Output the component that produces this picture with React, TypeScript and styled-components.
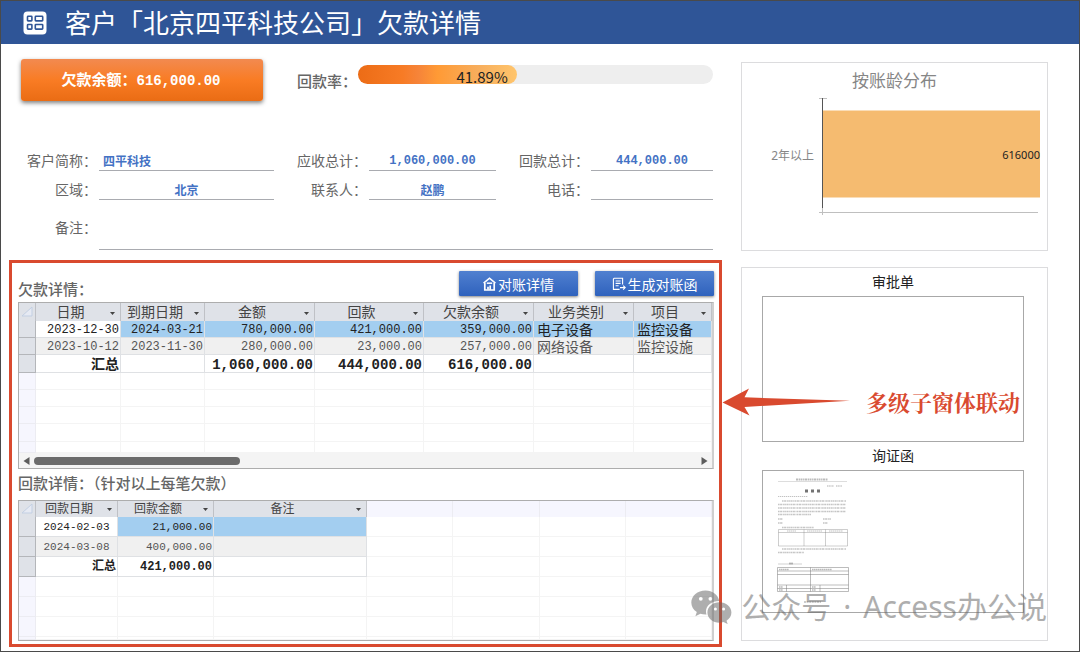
import React from "react";
import styled, { createGlobalStyle, css } from "styled-components";

const SANS = '"Noto Sans CJK SC", "Noto Sans", sans-serif';
const MONO = '"Liberation Mono", "Noto Sans CJK SC", monospace';

const GlobalStyle = createGlobalStyle`
  *, *::before, *::after { box-sizing: border-box; }
  body { margin: 0; background: #fff; font-family: ${SANS}; }
  h1, h2, h3, p { margin: 0; font-weight: 400; }
  button, input, textarea { font: inherit; margin: 0; padding: 0; border: 0; }
`;

const Page = styled.div`
  display: flex;
  flex-direction: column;
  min-height: 100vh;
  border: 1px solid #4a4a4a;
  overflow: hidden;
`;

const TitleBar = styled.header`
  display: flex;
  align-items: center;
  gap: 18px;
  height: 43px;
  padding: 0 22px;
  background: #2f5597;
`;

const Title = styled.h1`
  padding-bottom: 2px;
  font-size: 26px;
  line-height: 38px;
  color: #fff;
  white-space: nowrap;
`;

const Main = styled.main`
  display: flex;
  gap: 19px;
  padding: 0 31px 0 8px;
`;

const LeftColumn = styled.div`
  flex: 1;
  min-width: 0;
`;

const RightColumn = styled.aside`
  position: relative;
  flex: none;
  display: flex;
  flex-direction: column;
  gap: 16px;
  width: 307px;
  padding-top: 18px;
`;

const Summary = styled.section`
  padding: 15px 9px 0 12px;
`;

const BalanceRow = styled.div`
  display: flex;
  align-items: flex-start;
  height: 83px;
`;

const BalanceButton = styled.button`
  width: 242px;
  height: 42px;
  margin-right: 34px;
  padding: 0 2px 4px 0;
  border-radius: 3px;
  background: linear-gradient(#f28a50, #f97c24 50%, #ea6c14);
  box-shadow: 0 2px 4px rgba(0, 0, 0, 0.5);
  color: #fff;
  font-size: 15px;
  font-weight: 700;
  white-space: nowrap;
`;

const BalanceAmount = styled.span`
  font-family: ${MONO};
  font-size: 14px;
`;

const RateLabel = styled.span`
  flex: none;
  width: 61px;
  font-size: 15px;
  font-weight: 500;
  line-height: 44px;
  color: #666;
`;

const RateTrack = styled.div`
  flex: 1;
  height: 19px;
  margin-top: 6px;
  border-radius: 10px;
  background: #eee;
`;

const RateFill = styled.div`
  height: 19px;
  padding-right: 9px;
  border-radius: 10px;
  background: linear-gradient(90deg, #ec6c16, #f77b25 28%, #f68439 38%, #ff9a35 50%, #f7ad5c 75%, #ffc56c);
  color: #222;
  font-size: 15px;
  line-height: 24px;
  text-align: right;
`;

const Form = styled.form`
  display: grid;
  grid-template-columns: 78px 175fr 95px 127fr 95px 122fr;
  grid-template-rows: 29px 29px 50px;
  height: 118px;
`;

const FieldLabel = styled.label<{ $raised?: boolean }>`
  align-self: end;
  padding: 0 2px ${(p) => (p.$raised ? 13 : 1)}px 0;
  font-size: 14px;
  line-height: 20px;
  text-align: right;
  color: #666;
  white-space: nowrap;
`;

const underlined = css`
  min-width: 0;
  width: 100%;
  border-bottom: 1px solid #a9abb0;
  background: transparent;
  color: #4472c4;
  font-family: ${MONO};
  font-size: 12px;
  font-weight: 700;
  outline: none;
`;

const Field = styled.input<{ $align?: string }>`
  ${underlined}
  align-self: end;
  height: 20px;
  padding: 0 4px;
  line-height: 18px;
  text-align: ${(p) => p.$align || "center"};
`;

const NoteField = styled.textarea`
  ${underlined}
  grid-column: 2 / -1;
  align-self: end;
  height: 40px;
  resize: none;
`;

const Frame = styled.section`
  padding: 0 5px 3px 6px;
  border: 3px solid #d94a2f;
`;

const Toolbar = styled.div`
  display: flex;
  align-items: flex-start;
  gap: 17px;
  height: 39px;
  padding-top: 8px;
`;

const SectionTitle = styled.h2<{ $grow?: boolean }>`
  flex: ${(p) => (p.$grow ? 1 : "none")};
  padding-bottom: ${(p) => (p.$grow ? 0 : 3)}px;
  font-size: 15px;
  font-weight: 500;
  line-height: ${(p) => (p.$grow ? 36 : 28)}px;
  color: #666;
`;

const ActionButton = styled.button`
  display: flex;
  align-items: center;
  justify-content: center;
  gap: 2px;
  width: 119px;
  height: 25px;
  border-radius: 1px;
  background: linear-gradient(#5080d0, #2f62bd);
  box-shadow: 0 1px 3px rgba(0, 0, 0, 0.5);
  color: #fff;
  font-size: 14px;
  line-height: 20px;
  white-space: nowrap;
`;

const GridBox = styled.div`
  border: 1px solid #adadad;
  border-right: 2px solid #cfcfcf;
  overflow: hidden;
`;

const Sheet = styled.table<{ $small?: boolean }>`
  width: 100%;
  table-layout: fixed;
  border-collapse: separate;
  border-spacing: 0;
  font-family: ${MONO};
  font-size: ${(p) => (p.$small ? 11 : 12)}px;
  color: #333;

  th, td {
    padding: 0;
    white-space: nowrap;
  }
`;

const Row = styled.tr<{ $h: number }>`
  height: ${(p) => p.$h}px;
  line-height: ${(p) => Math.max(p.$h - 4, 1)}px;
`;

const HeadCell = styled.th<{ $blank?: boolean; $small?: boolean }>`
  border-right: 1px solid ${(p) => (p.$blank ? "#ececf2" : "#bfc1c6")};
  background: ${(p) => (p.$blank ? "#f6f6fe" : "#dfe2e8")};
  color: #444;
  font-family: ${SANS};
  font-size: ${(p) => (p.$small ? 12 : 14)}px;
  font-weight: 400;
`;

const HeadInner = styled.div`
  display: flex;
  align-items: flex-end;
  justify-content: center;
  padding-bottom: 2px;
`;

const HeadText = styled.span`
  flex: 1;
  text-align: center;
`;

const SortButton = styled.button`
  display: flex;
  align-items: center;
  justify-content: center;
  width: 15px;
  height: 9px;
  background: transparent;
`;

const Selector = styled.th<{ $blank?: boolean }>`
  border-right: 1px solid ${(p) => (p.$blank ? "#ececf2" : "#b4b6ba")};
  border-bottom: 1px solid ${(p) => (p.$blank ? "#ececf2" : "#b4b6ba")};
  background: ${(p) => (p.$blank ? "#f6f6fe" : "#dfe2e8")};
`;

type Tone = "plain" | "active" | "stripe" | "total" | "empty";

const toneBackground: Record<Tone, string> = {
  plain: "#fff",
  active: "#a3cef0",
  stripe: "#f0f0f0",
  total: "#fff",
  empty: "#fff",
};

const Cell = styled.td<{ $tone: Tone; $text?: boolean; $small?: boolean; $center?: boolean }>`
  && {
    padding: ${(p) => (p.$text || p.$small || p.$tone === "empty" ? 0 : 3)}px ${(p) => (p.$text ? 3 : 1)}px 0;
  }
  border-right: 1px solid ${(p) => (p.$tone === "empty" ? "#f4f4f4" : "#dfe1e4")};
  border-bottom: 1px solid ${(p) => (p.$tone === "empty" ? "#f4f4f4" : "#dfe1e4")};
  background: ${(p) => toneBackground[p.$tone]};
  text-align: ${(p) => (p.$text ? "left" : p.$center ? "center" : "right")};
  color: ${(p) => (p.$tone === "stripe" ? "#555" : "#222")};
  ${(p) => p.$text && css`font-family: ${SANS}; font-size: 14px;`}
  ${(p) => p.$tone === "total" && css`font-weight: 700; font-size: ${p.$small ? 12 : 14}px;`}
`;

const ScrollBar = styled.div`
  display: flex;
  align-items: center;
  gap: 4px;
  height: 15px;
  padding: 0 4px;
  background: #f4f4f4;
`;

const ScrollTrack = styled.div`
  flex: 1;
`;

const ScrollThumb = styled.div`
  width: 31%;
  height: 8px;
  border-radius: 4px;
  background: #6b6b6b;
`;

const ChartCard = styled.section`
  height: 189px;
  border: 1px solid #dcdcde;
`;

const ChartTitle = styled.h2`
  height: 33px;
  font-size: 17px;
  line-height: 34px;
  text-align: center;
  color: #868686;
`;

const ChartSvg = styled.svg`
  display: block;
  width: 100%;
  font-family: "Noto Sans", "Noto Sans CJK SC", sans-serif;
`;

const DocsCard = styled.section`
  height: 374px;
  padding: 0 23px 0 20px;
  border: 1px solid #dcdcde;
`;

const DocTitle = styled.h3`
  padding-bottom: 2px;
  font-size: 14px;
  line-height: 26px;
  text-align: center;
  color: #222;
`;

const DocBox = styled.div<{ $h: number }>`
  height: ${(p) => p.$h}px;
  padding: 5px 13px;
  border: 1px solid #a8a8a8;
`;

const Callout = styled.div`
  position: absolute;
  top: 342px;
  left: -19px;
  display: flex;
  align-items: center;
  gap: 15px;
  color: #d94a2f;
  font-family: "Noto Serif CJK SC", "Noto Sans CJK SC", serif;
  font-size: 22px;
  font-weight: 700;
  line-height: 32px;
  white-space: nowrap;
  pointer-events: none;
`;

const Watermark = styled.div`
  position: absolute;
  top: 541px;
  right: 1px;
  display: flex;
  align-items: center;
  gap: 9px;
  color: #666;
  opacity: 0.52;
  font-family: "Noto Sans", "Noto Sans CJK SC", sans-serif;
  font-size: 30px;
  line-height: 44px;
  white-space: nowrap;
  pointer-events: none;
`;

const WatermarkDot = styled.span`
  padding: 0 3px;
`;

const FormIcon = () => (
  <svg width="24" height="24" viewBox="0 0 24 24" aria-hidden="true">
    <rect x="0.5" y="0.5" width="23" height="23" rx="4" fill="#fff" />
    <g fill="none" stroke="#2f5597" strokeWidth="1.6">
      <rect x="4.5" y="5.3" width="4.4" height="4.6" rx="0.6" />
      <rect x="12.3" y="5.3" width="7.4" height="4.6" rx="0.6" />
      <rect x="4.5" y="13.5" width="4.4" height="4.6" rx="0.6" />
      <rect x="12.3" y="13.5" width="7.4" height="4.6" rx="0.6" />
    </g>
  </svg>
);

const HouseIcon = () => (
  <svg width="13" height="14" viewBox="0 0 13 14" fill="none" stroke="#fff" aria-hidden="true">
    <path d="M0.6 6.2 6.5 1.2 12.4 6.2" strokeWidth="1.6" />
    <path d="M1.8 6v7h9.4V6" strokeWidth="1.7" />
    <path d="M3.8 6.2h5.4" strokeWidth="1.5" />
    <path d="M7.2 8.4v4.400M5 9.800v2.700" strokeWidth="1.7" />
  </svg>
);

const StatementIcon = () => (
  <svg width="14" height="14" viewBox="0 0 14 14" fill="none" stroke="#fff" strokeWidth="1.1" aria-hidden="true">
    <path d="M10.6 7.6V1.2H2.2L1.4 2v10.4h6.2M3.6 4h5M3.6 6.4h5M3.6 8.8h3" />
    <path d="M8 10.6h5M11.2 8.6l2 2-2 2" />
  </svg>
);

const SortArrow = () => (
  <svg width="7" height="5" viewBox="0 0 7 5" aria-hidden="true">
    <path d="M1 1h5L3.5 4z" fill="#444" />
  </svg>
);

const CornerIcon = () => (
  <svg width="12" height="11" viewBox="0 0 12 11" aria-hidden="true">
    <path d="M11 1v9H1z" fill="#e6eaf3" stroke="#c3cfe2" />
  </svg>
);

const ScrollArrow = ({ flip }: { flip?: boolean }) => (
  <svg width="7" height="8" viewBox="0 0 7 8" aria-hidden="true">
    <path d={flip ? "M0.5 0v8L6.5 4z" : "M6.5 0v8L0.5 4z"} fill="#5c5c5c" />
  </svg>
);

const WechatIcon = () => (
  <svg width="41" height="34" viewBox="0 0 41 34" aria-hidden="true">
    <path
      fill="currentColor"
      fillRule="evenodd"
      d="M14.5 0.5C6.6 0.5 0.3 5.9 0.3 12.6c0 3.9 2.1 7.3 5.5 9.5l-1.4 4.1 5-2.5c1.6.5 3.3.8 5.1.8h1C15.1 23.5 15 22.5 15 21.6 15 15.6 20.6 11.1 28.3 11.1 27.3 5 21.4.5 14.5.5ZM9.8 6.9a1.9 1.9 0 1 1 0 3.8 1.9 1.9 0 0 1 0-3.8Zm9.6 0a1.9 1.9 0 1 1 0 3.8 1.9 1.9 0 0 1 0-3.8Z"
    />
    <path
      fill="currentColor"
      fillRule="evenodd"
      d="M28.4 12.3c-6.7 0-12 4.5-12 10.2s5.3 10.2 12 10.2c1.5 0 2.9-.2 4.1-.6l4.2 2-1.2-3.4c3-1.9 4.9-4.8 4.9-8.2 0-5.7-5.3-10.2-12-10.2Zm-4 5.3a1.5 1.5 0 1 1 0 3 1.5 1.5 0 0 1 0-3Zm8.2 0a1.5 1.5 0 1 1 0 3 1.5 1.5 0 0 1 0-3Z"
    />
  </svg>
);

const CalloutArrow = () => (
  <svg width="129" height="28" viewBox="0 0 129 28" aria-hidden="true">
    <path d="M0.5 14.5 27 0.5 22.5 9.3 128 12.8 22.5 19 27.5 27.5Z" fill="#d94a2f" />
  </svg>
);

const LetterThumb = () => (
  <svg width="74" height="132" viewBox="0 0 74 132" fill="none" stroke="#777" role="img" aria-label="询证函">
    <path d="M20 3.5h32" strokeWidth="2" strokeDasharray="2 0.6 1.4 0.5" opacity="0.5" />
    <path d="M2 5.5h69" strokeWidth="0.5" opacity="0.5" />
    <path d="M51 10h7m2 0h6" strokeWidth="1.4" strokeDasharray="1.2 0.5" opacity="0.4" />
    <path d="M29 15h3m3 0h3m3 0h3" strokeWidth="2.8" stroke="#444" opacity="0.75" />
    <path d="M2 20.5h30" strokeWidth="1.2" strokeDasharray="1.3 0.7" opacity="0.45" />
    <g strokeWidth="1.7" strokeDasharray="1.6 0.5 2.2 0.6 1 0.4" opacity="0.42">
      <path d="M6 25h64M2 28.5h68M2 32h68M2 35.5h68M2 38.5h33" />
      <path d="M2 43h5M47 43h8M2 47h5M47 47h5M6 51.5h32" />
      <path d="M6 73h64M2 76.5h26" />
    </g>
    <g strokeWidth="0.6" opacity="0.6">
      <path d="M2.5 53.5h69v16.5h-69zM2.5 56.5h69M28 53.5v16.5M49.5 53.5v16.5" />
    </g>
    <path d="M11 55h9M31 55h15M53 55h14" strokeWidth="1.2" strokeDasharray="1.5 0.5" opacity="0.45" />
    <path d="M2 88h24" strokeWidth="0.7" opacity="0.5" />
    <path d="M13 87.5h4" strokeWidth="1.8" opacity="0.5" />
    <g strokeWidth="0.7" opacity="0.7">
      <path d="M1.5 91.5h71v24h-71zM1.5 95h71M1.5 98.5h71M1.5 109h71M1.5 112.5h71M34.5 91.5v24M10.5 109v6.5M44 109v6.5" />
    </g>
    <path d="M3 93.5h10M36 93.5h20M3 111h4M36 111h4M3 114h4M36 114h4" strokeWidth="1.3" strokeDasharray="1.6 0.4" opacity="0.5" />
    <path d="M28 126h17" strokeWidth="1.6" strokeDasharray="2 0.6" opacity="0.5" />
  </svg>
);

interface Column {
  label: string;
  width?: number;
}

const debtColumns: Column[] = [
  { label: "日期", width: 85 },
  { label: "到期日期", width: 84 },
  { label: "金额", width: 110 },
  { label: "回款", width: 109 },
  { label: "欠款余额", width: 110 },
  { label: "业务类别", width: 100 },
  { label: "项目" },
];

const debtRows: { tone: Tone; height: number; values: string[] }[] = [
  {
    tone: "active",
    height: 17,
    values: ["2023-12-30", "2024-03-21", "780,000.00", "421,000.00", "359,000.00", "电子设备", "监控设备"],
  },
  {
    tone: "stripe",
    height: 17,
    values: ["2023-10-12", "2023-11-30", "280,000.00", "23,000.00", "257,000.00", "网络设备", "监控设施"],
  },
  {
    tone: "total",
    height: 18,
    values: ["汇总", "", "1,060,000.00", "444,000.00", "616,000.00", "", ""],
  },
];

const paymentColumns: Column[] = [
  { label: "回款日期", width: 82 },
  { label: "回款金额", width: 96 },
  { label: "备注", width: 153 },
];

const paymentRows: { tone: Tone; values: string[] }[] = [
  { tone: "active", values: ["2024-02-03", "21,000.00", ""] },
  { tone: "stripe", values: ["2024-03-08", "400,000.00", ""] },
  { tone: "total", values: ["汇总", "421,000.00", ""] },
];

const range = (n: number) => Array.from({ length: n }, (_, i) => i);

const HeaderCells = ({ columns, small }: { columns: Column[]; small?: boolean }) => (
  <>
    {columns.map((c) => (
      <HeadCell key={c.label} scope="col" $small={small}>
        <HeadInner>
          <HeadText>{c.label}</HeadText>
          <SortButton type="button" aria-label={`${c.label}筛选`}>
            <SortArrow />
          </SortButton>
        </HeadInner>
      </HeadCell>
    ))}
  </>
);

const DebtSheet = () => (
  <GridBox>
    <Sheet>
      <colgroup>
        <col style={{ width: 17 }} />
        {debtColumns.map((c) => (
          <col key={c.label} style={{ width: c.width }} />
        ))}
      </colgroup>
      <thead>
        <Row $h={18}>
          <HeadCell>
            <HeadInner><CornerIcon /></HeadInner>
          </HeadCell>
          <HeaderCells columns={debtColumns} />
        </Row>
      </thead>
      <tbody>
        {debtRows.map((r) => (
          <Row key={r.tone} $h={r.height}>
            <Selector scope="row" />
            {r.values.map((v, i) => (
              <Cell key={i} $tone={r.tone === "active" && i === 0 ? "plain" : r.tone} $text={i > 4}>
                {v}
              </Cell>
            ))}
          </Row>
        ))}
        {[17, 17, 17, 18, 11].map((h, n) => (
          <Row key={n} $h={h}>
            <Selector $blank />
            {debtColumns.map((c) => (
              <Cell key={c.label} $tone="empty" />
            ))}
          </Row>
        ))}
      </tbody>
    </Sheet>
    <ScrollBar>
      <ScrollArrow />
      <ScrollTrack>
        <ScrollThumb />
      </ScrollTrack>
      <ScrollArrow flip />
    </ScrollBar>
  </GridBox>
);

const PaymentSheet = () => (
  <GridBox>
    <Sheet $small>
      <colgroup>
        <col style={{ width: 17 }} />
        {paymentColumns.map((c) => (
          <col key={c.label} style={{ width: c.width }} />
        ))}
        {range(4).map((i) => (
          <col key={i} />
        ))}
      </colgroup>
      <thead>
        <Row $h={16}>
          <HeadCell $small>
            <HeadInner><CornerIcon /></HeadInner>
          </HeadCell>
          <HeaderCells columns={paymentColumns} small />
          {range(4).map((i) => (
            <HeadCell key={i} $blank />
          ))}
        </Row>
      </thead>
      <tbody>
        {paymentRows.map((r) => (
          <Row key={r.tone} $h={20}>
            <Selector scope="row" />
            {r.values.map((v, i) => (
              <Cell
                key={i}
                $small
                $center={i === 0 && r.tone !== "total"}
                $tone={r.tone === "active" && i === 0 ? "plain" : r.tone}
              >
                {v}
              </Cell>
            ))}
            {range(4).map((i) => (
              <Cell key={`e${i}`} $tone="empty" />
            ))}
          </Row>
        ))}
        {[20, 20, 20, 3].map((h, n) => (
          <Row key={n} $h={h}>
            <Selector $blank />
            {range(7).map((i) => (
              <Cell key={i} $tone="empty" />
            ))}
          </Row>
        ))}
      </tbody>
    </Sheet>
  </GridBox>
);

const AgingChart = () => (
  <ChartSvg viewBox="0 0 305 150" role="img" aria-label="按账龄分布">
    <rect x="81" y="14.5" width="217" height="87" fill="#f5bb70" />
    <path d="M77 2.5h8M80.5 110v9M77 116.5h219" stroke="#bfbfbf" fill="none" />
    <path d="M80.5 2v110" stroke="#555" />
    <text x="72" y="64" fontSize="12" fill="#868686" textAnchor="end">2年以上</text>
    <text x="298" y="63" fontSize="11" fill="#222" textAnchor="end">616000</text>
  </ChartSvg>
);

export default function App() {
  return (
    <>
      <GlobalStyle />
      <Page>
        <TitleBar>
          <FormIcon />
          <Title>客户「北京四平科技公司」欠款详情</Title>
        </TitleBar>
        <Main>
          <LeftColumn>
            <Summary>
              <BalanceRow>
                <BalanceButton type="button">
                  欠款余额：<BalanceAmount>616,000.00</BalanceAmount>
                </BalanceButton>
                <RateLabel>回款率：</RateLabel>
                <RateTrack>
                  <RateFill style={{ width: "calc(41.89% + 10px)" }}>41.89%</RateFill>
                </RateTrack>
              </BalanceRow>
              <Form>
                <FieldLabel htmlFor="short">客户简称：</FieldLabel>
                <Field id="short" $align="left" defaultValue="四平科技" />
                <FieldLabel htmlFor="due">应收总计：</FieldLabel>
                <Field id="due" defaultValue="1,060,000.00" />
                <FieldLabel htmlFor="paid">回款总计：</FieldLabel>
                <Field id="paid" defaultValue="444,000.00" />
                <FieldLabel htmlFor="area">区域：</FieldLabel>
                <Field id="area" defaultValue="北京" />
                <FieldLabel htmlFor="contact">联系人：</FieldLabel>
                <Field id="contact" defaultValue="赵鹏" />
                <FieldLabel htmlFor="phone">电话：</FieldLabel>
                <Field id="phone" />
                <FieldLabel htmlFor="note" $raised>备注：</FieldLabel>
                <NoteField id="note" />
              </Form>
            </Summary>
            <Frame>
              <Toolbar>
                <SectionTitle $grow>欠款详情：</SectionTitle>
                <ActionButton type="button">
                  <HouseIcon />
                  对账详情
                </ActionButton>
                <ActionButton type="button">
                  <StatementIcon />
                  生成对账函
                </ActionButton>
              </Toolbar>
              <DebtSheet />
              <SectionTitle>回款详情：（针对以上每笔欠款）</SectionTitle>
              <PaymentSheet />
            </Frame>
          </LeftColumn>
          <RightColumn>
            <ChartCard>
              <ChartTitle>按账龄分布</ChartTitle>
              <AgingChart />
            </ChartCard>
            <DocsCard>
              <DocTitle>审批单</DocTitle>
              <DocBox $h={146} />
              <DocTitle>询证函</DocTitle>
              <DocBox $h={143}>
                <LetterThumb />
              </DocBox>
            </DocsCard>
            <Callout>
              <CalloutArrow />
              <span>多级子窗体联动</span>
            </Callout>
            <Watermark>
              <WechatIcon />
              <span>公众号</span>
              <WatermarkDot>·</WatermarkDot>
              <span>Access办公说</span>
            </Watermark>
          </RightColumn>
        </Main>
      </Page>
    </>
  );
}
